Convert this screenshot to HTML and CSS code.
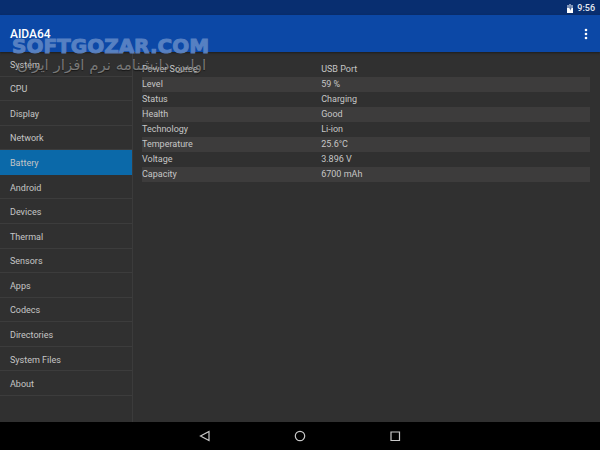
FILE: index.html
```html
<!DOCTYPE html>
<html lang="en">
<head>
<meta charset="utf-8">
<meta name="viewport" content="width=device-width, initial-scale=1">
<title>AIDA64</title>
<link rel="stylesheet" href="styles.css">
</head>
<body>
<div class="status">
  <svg class="battery" viewBox="0 0 6 9" aria-hidden="true"><path fill="#8094b8" d="M2 0h2v1h2v3H0V1h2z"/><path fill="#fff" d="M0 4h6v5H0z"/><path fill="#4a6696" d="M3.6 2 2 4.6h1v2.2l1.6-2.8h-1z"/></svg>
  <span>9:56</span>
</div>
<header class="appbar">
  <h1 class="title">AIDA64</h1>
  <button class="more" type="button" aria-label="More options"><svg class="dots" viewBox="0 0 4 12"><circle cx="2" cy="2" r="1.3"/><circle cx="2" cy="6" r="1.3"/><circle cx="2" cy="10" r="1.3"/></svg></button>
</header>
<main class="content">
  <nav class="menu">
    <a class="item" href="#">System</a>
    <a class="item" href="#">CPU</a>
    <a class="item" href="#">Display</a>
    <a class="item" href="#">Network</a>
    <a class="item active" href="#" aria-current="page">Battery</a>
    <a class="item" href="#">Android</a>
    <a class="item" href="#">Devices</a>
    <a class="item" href="#">Thermal</a>
    <a class="item" href="#">Sensors</a>
    <a class="item" href="#">Apps</a>
    <a class="item" href="#">Codecs</a>
    <a class="item" href="#">Directories</a>
    <a class="item" href="#">System Files</a>
    <a class="item" href="#">About</a>
  </nav>
  <section class="details">
    <table class="info">
      <tbody>
        <tr><th scope="row">Power Source</th><td>USB Port</td></tr>
        <tr><th scope="row">Level</th><td>59 %</td></tr>
        <tr><th scope="row">Status</th><td>Charging</td></tr>
        <tr><th scope="row">Health</th><td>Good</td></tr>
        <tr><th scope="row">Technology</th><td>Li-ion</td></tr>
        <tr><th scope="row">Temperature</th><td>25.6°C</td></tr>
        <tr><th scope="row">Voltage</th><td>3.896 V</td></tr>
        <tr><th scope="row">Capacity</th><td>6700 mAh</td></tr>
      </tbody>
    </table>
  </section>
</main>
<footer class="navbar">
  <button class="key" type="button" aria-label="Back"><svg viewBox="0 0 12 12"><path d="M10 1.5v9L1.5 6z"/></svg></button>
  <button class="key" type="button" aria-label="Home"><svg viewBox="0 0 12 12"><circle cx="6" cy="6" r="4.7"/></svg></button>
  <button class="key" type="button" aria-label="Recent apps"><svg viewBox="0 0 12 12"><path d="M2 2h8.5v8.5H2z"/></svg></button>
</footer>
<div class="watermark">
  <div class="brand">SOFTGOZAR.COM</div>
  <div class="slogan" lang="fa" dir="rtl">اولین دانشنامه نرم افزار ایران</div>
</div>
</body>
</html>
```
FILE: styles.css
```css
* {
  box-sizing: border-box;
}

body {
  position: relative;
  display: flex;
  flex-direction: column;
  min-height: 100vh;
  margin: 0;
  background: #303030;
  color: #c6c6c6;
  font: 9px/15px Roboto, sans-serif;
}

button {
  display: flex;
  align-items: center;
  justify-content: center;
  padding: 0;
  border: 0;
  background: none;
}

.status {
  display: flex;
  align-items: center;
  justify-content: flex-end;
  gap: 4px;
  height: 15px;
  padding: 1px 5px 0;
  background: #082e70;
  color: #e6eaf2;
  font-weight: 500;
}

.battery {
  width: 6px;
  height: 9px;
}

.appbar {
  display: flex;
  align-items: center;
  justify-content: space-between;
  height: 37px;
  padding: 1px 10px 0;
  background: #0c48a6;
  box-shadow: 0 1px 2px #1c1c1c;
}

.title {
  margin: 0;
  color: #fff;
  font-size: 12px;
  font-weight: 500;
}

.more {
  width: 9px;
  height: 24px;
}

.dots {
  width: 4px;
  height: 12px;
  fill: #fff;
}

.content {
  flex: 1;
  display: grid;
  grid-template-columns: 22% 1fr;
}

.menu {
  display: grid;
  grid-auto-rows: 1fr;
  padding-bottom: 26px;
}

.item {
  display: flex;
  align-items: center;
  padding: 3px 10px 0;
  border-bottom: 1px solid #3c3c3c;
  color: inherit;
  text-decoration: none;
}

.active {
  border-color: #0b69a9;
  background: #0b69a9;
}

.details {
  padding: 10px 10px 10px 9px;
  border-left: 1px solid #3b3b3b;
}

.info {
  width: 100%;
  table-layout: fixed;
  border-collapse: collapse;
}

.info th,
.info td {
  padding: 0;
  font-weight: 400;
  text-align: left;
}

.info th {
  width: 40%;
}

.info tr:nth-child(even) {
  background: #3d3c3c;
}

.navbar {
  display: flex;
  align-items: center;
  justify-content: center;
  gap: 71px;
  height: 28px;
  background: #000;
}

.key {
  width: 24px;
  height: 24px;
}

.key svg {
  width: 12px;
  height: 12px;
  fill: none;
  stroke: #c8c8c8;
  stroke-width: 1.2;
}

.watermark {
  position: absolute;
  top: 36px;
  left: 12px;
  white-space: nowrap;
  pointer-events: none;
}

.brand {
  color: #5f87c6;
  font: bold 20px/20px "DejaVu Sans", sans-serif;
  -webkit-text-stroke: 1px #5f87c6;
  opacity: 0.9;
}

.slogan {
  padding-right: 3px;
  color: rgba(190, 190, 190, 0.55);
  font: 15px/18px "DejaVu Sans", sans-serif;
  text-shadow: 0 1px 1px rgba(0, 0, 0, 0.5);
}
```
